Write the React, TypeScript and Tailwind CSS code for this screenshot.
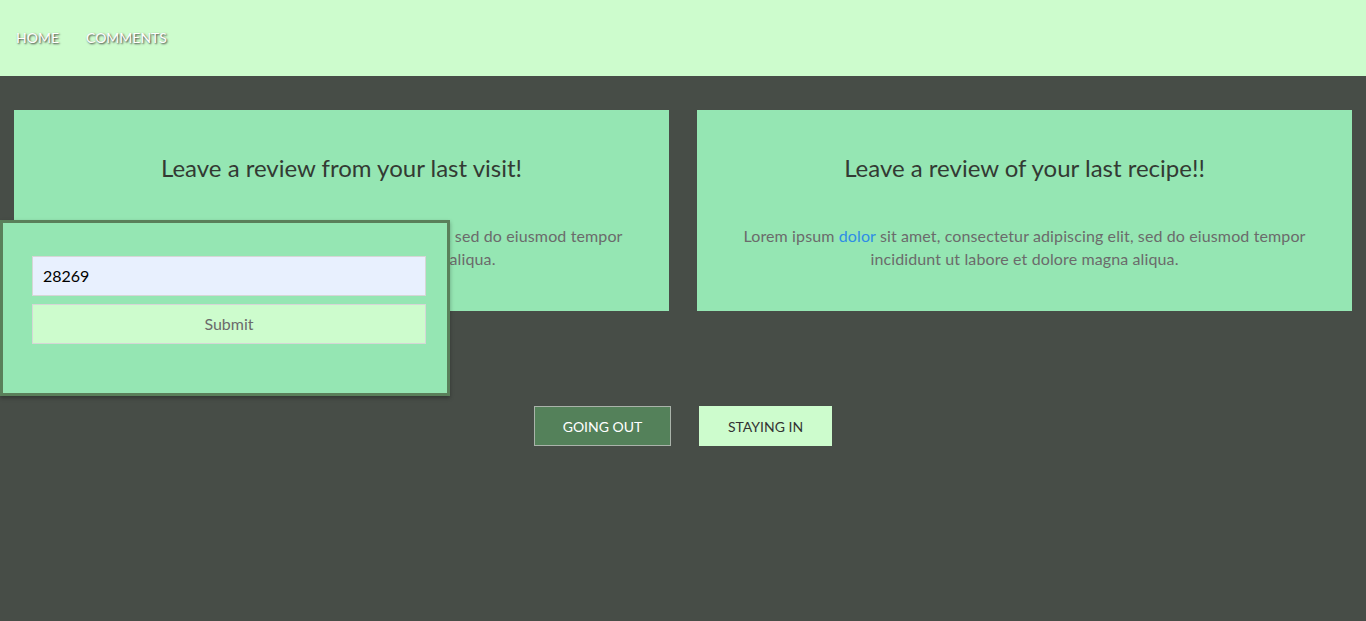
import React from "react";

const font = { fontFamily: "Lato, 'Noto Sans', sans-serif" };

function Card({ title }: { title: string }) {
  return (
    <div className="flex-1 bg-[#95e6b3] h-[201px] flex flex-col items-center pt-[42px] px-8">
      <h2 className="text-[24px] leading-[32px] text-[#333a33]">{title}</h2>
      <p className="mt-[40px] text-[16px] leading-[23px] tracking-[0.12px] text-[#6b6b6b] text-center max-w-[590px]">
        Lorem ipsum <span className="text-[#2e8de6]">dolor</span> sit amet, consectetur adipiscing elit, sed do eiusmod tempor incididunt ut labore et dolore magna aliqua.
      </p>
    </div>
  );
}

export default function App() {
  return (
    <div className="relative min-h-[621px] bg-[#474d47]" style={font}>
      <header className="h-[76px] bg-[#cdfccd] flex items-center gap-[27px] px-4 pb-[2px]">
        <span className="text-[14px] text-white [text-shadow:1px_1px_2px_#333]">HOME</span>
        <span className="text-[14px] text-white [text-shadow:1px_1px_2px_#333]">COMMENTS</span>
      </header>
      <div className="flex gap-[28px] px-[14px] pt-[34px]">
        <Card title="Leave a review from your last visit!" />
        <Card title="Leave a review of your last recipe!!" />
      </div>
      <div className="flex justify-center gap-[28px] mt-[95px]">
        <button className="h-[40px] w-[137px] bg-[#54815a] border border-[#aab3aa] text-white text-[14px]">GOING OUT</button>
        <button className="h-[40px] w-[133px] bg-[#cdfccd] text-[#333] text-[14px]">STAYING IN</button>
      </div>
      <div className="absolute left-0 top-[220px] w-[450px] h-[176px] bg-[#95e6b3] border-[3px] border-[#5a7f5a] shadow-[0_2px_4px_rgba(0,0,0,0.3)] pl-[29px] pr-[21px] pt-[33px]">
        <div className="h-[40px] bg-[#e8f0fe] border border-[#d6d6d6] flex items-center px-[10px] text-[16px] text-black">28269</div>
        <button className="mt-[8px] w-full h-[40px] bg-[#cdfccd] border border-[#d6d6d6] text-[16px] text-[#6b6b6b]">Submit</button>
      </div>
    </div>
  );
}
